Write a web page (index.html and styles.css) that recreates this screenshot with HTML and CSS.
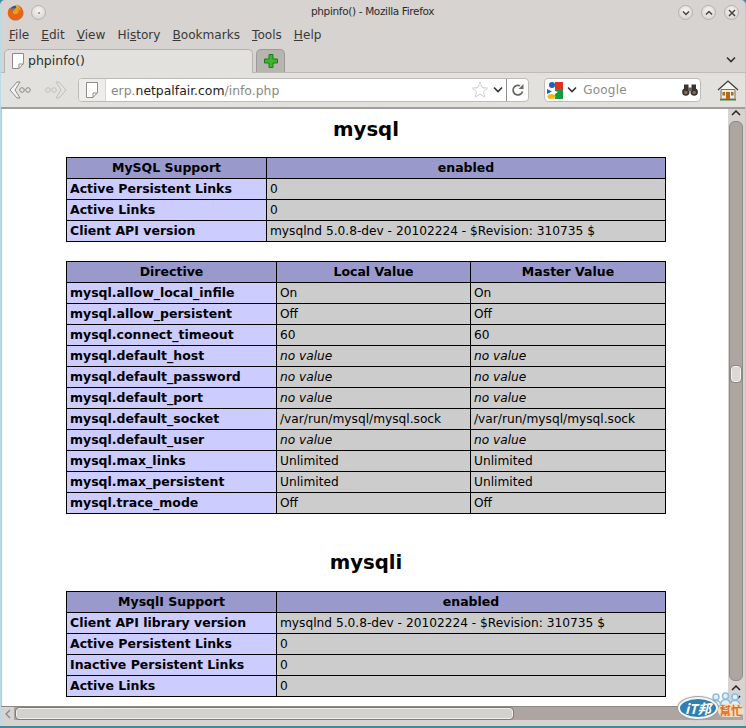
FILE: index.html
```html
<!DOCTYPE html>
<html lang="en">
<head>
<meta charset="utf-8">
<title>phpinfo() - Mozilla Firefox</title>
<link rel="stylesheet" href="styles.css">
</head>
<body>
<div class="window">
  <header class="titlebar">
    <div class="title-left">
      <svg class="ff-logo" width="17" height="17" viewBox="0 0 18 18"><circle cx="9.500" cy="8.500" r="7" fill="#2a5a9a"/><path d="M10 3.500C12.500 4 14 6.500 13.500 9 13 11.500 10 13 7.500 12 5.500 11 5 9 6 7.500Z" fill="#e8a020"/><path d="M10 .8C14 1.500 17.500 5 17.500 9.500 17.500 14 13.500 17.500 9 17.500 4.500 17.500.8 14 .8 9.500.8 7 1.800 5 3.300 3.500L3.800 6C5 4.500 6.500 4 8 4.800 6.800 5.500 5.300 7 6 9 7 11.300 10.500 11.300 12 9 13 7 12.300 3.500 10 .8Z" fill="#e2661a"/><path d="M10 .8C12.500 2 14.300 4.500 14.500 7.500 13 4.800 11.500 3.800 9.500 3.500Z" fill="#f3b72c"/></svg>
      <span class="round-btn pin"><i class="dot"></i></span>
    </div>
    <span class="title-text">phpinfo() - Mozilla Firefox</span>
    <div class="title-right">
      <span class="round-btn"><svg width="10" height="10" viewBox="0 0 10 10"><path d="M2 3.500 5 6.500 8 3.500" fill="none" stroke="#444" stroke-width="1.500"/></svg></span>
      <span class="round-btn"><svg width="10" height="10" viewBox="0 0 10 10"><path d="M2 6.500 5 3.500 8 6.500" fill="none" stroke="#444" stroke-width="1.500"/></svg></span>
      <span class="round-btn"><svg width="10" height="10" viewBox="0 0 10 10"><path d="M2 2 8 8M8 2 2 8" fill="none" stroke="#444" stroke-width="1.500"/></svg></span>
    </div>
  </header>
  <nav class="menubar">
    <span><u>F</u>ile</span><span><u>E</u>dit</span><span><u>V</u>iew</span><span>Hi<u>s</u>tory</span><span><u>B</u>ookmarks</span><span><u>T</u>ools</span><span><u>H</u>elp</span>
  </nav>
  <div class="tabbar">
    <div class="tab">
      <svg class="page-icon" width="14" height="16" viewBox="0 0 14 16"><path d="M1.500.5H12.500V10.500L8 15.500H1.500Z" fill="#fff" stroke="#8f8c88"/><path d="M8 15.500V11H12.500" fill="none" stroke="#8f8c88"/></svg>
      <span>phpinfo()</span>
    </div>
    <div class="newtab"><svg width="16" height="16" viewBox="0 0 16 16"><path d="M6 1.500H10V6H14.500V10H10V14.500H6V10H1.500V6H6Z" fill="#3fb52c" stroke="#1f7d18"/></svg></div>
    <div class="tabbar-fill"><svg width="12" height="8" viewBox="0 0 12 8"><path d="M2 1.500 6 5.500 10 1.500" fill="none" stroke="#333" stroke-width="1.600"/></svg></div>
  </div>
  <div class="navbar">
    <svg class="nav-arrow" width="32" height="22" viewBox="0 0 32 22"><path d="M10 3 3 11 10 19H13L8 11 13 3Z" fill="#f4f3f1" stroke="#8d8a86"/><circle cx="15" cy="11" r="2.300" fill="none" stroke="#8d8a86"/><circle cx="21" cy="11" r="2.300" fill="none" stroke="#8d8a86"/></svg>
    <svg class="nav-arrow" width="32" height="22" viewBox="0 0 32 22"><path d="M20 3 27 11 20 19H17L22 11 17 3Z" fill="#e4e2df" stroke="#c2bfbb"/><circle cx="9" cy="11" r="2.300" fill="none" stroke="#c2bfbb"/><circle cx="15" cy="11" r="2.300" fill="none" stroke="#c2bfbb"/></svg>
    <div class="urlbar">
      <div class="url-icon"><svg width="14" height="16" viewBox="0 0 14 16"><path d="M1.500.5H12.500V10.500L8 15.500H1.500Z" fill="#fff" stroke="#8f8c88"/><path d="M8 15.500V11H12.500" fill="none" stroke="#8f8c88"/></svg></div>
      <div class="url-text"><span class="dim">erp.</span>netpalfair.com<span class="dim">/info.php</span></div>
      <svg width="18" height="18" viewBox="0 0 18 18"><path d="M9 1.500 11.200 6.600 16.500 7.100 12.500 10.700 13.700 16 9 13.200 4.300 16 5.500 10.700 1.500 7.100 6.800 6.600Z" fill="#fff" stroke="#cfcdca"/></svg>
      <svg class="url-drop" width="10" height="8" viewBox="0 0 10 8"><path d="M1 1.500 5 5.500 9 1.500" fill="none" stroke="#333" stroke-width="1.600"/></svg>
      <div class="reload"><svg width="14" height="14" viewBox="0 0 14 14"><path d="M11.500 8.500A4.800 4.800 0 1 1 9 2.800" fill="none" stroke="#6b6966" stroke-width="1.800"/><path d="M7.500 6H12.500V1Z" fill="#6b6966"/></svg></div>
    </div>
    <div class="searchbar">
      <svg class="g-logo" width="16" height="17" viewBox="0 0 16 17"><circle cx="5" cy="3" r="3" fill="#1a5fc4"/><path d="M0 7 5 9.500 0 12Z" fill="#1a5fc4"/><rect x="8" y="0" width="8" height="7" fill="#e03020"/><path d="M8 7H16V17H8V12L11 10 8 9Z" fill="#159a3c"/><ellipse cx="4.500" cy="14.500" rx="4" ry="2.500" fill="#f0b818"/></svg>
      <svg class="search-drop" width="10" height="8" viewBox="0 0 10 8"><path d="M1 1.500 5 5.500 9 1.500" fill="none" stroke="#333" stroke-width="1.600"/></svg>
      <span class="search-text">Google</span>
      <svg width="16" height="12" viewBox="0 0 16 12"><rect x="2" y="0.500" width="4.500" height="6" fill="#3a3430"/><rect x="9.500" y="0.500" width="4.500" height="6" fill="#3a3430"/><circle cx="3.800" cy="8" r="3.700" fill="#3a3430"/><circle cx="12.200" cy="8" r="3.700" fill="#3a3430"/><circle cx="3.800" cy="8.500" r="1.800" fill="#8a6a4a"/><circle cx="12.200" cy="8.500" r="1.800" fill="#8a6a4a"/><rect x="6" y="3.500" width="4" height="3.500" fill="#6b625c"/></svg>
    </div>
    <svg class="home" width="22" height="22" viewBox="0 0 22 22"><path d="M1 11 11 2 21 11" fill="#f6f4ef" stroke="#3b3b38" stroke-width="1.300"/><path d="M4 10.500H18V20H4Z" fill="#f0ebdd" stroke="#77736a"/><rect x="9" y="13" width="4" height="7" fill="#b86a12"/><rect x="5.500" y="13" width="2.500" height="3.500" fill="#a86a20"/><rect x="14" y="13" width="2.500" height="3.500" fill="#a86a20"/><rect x="3" y="20" width="16" height="1.500" fill="#3f8a2a"/></svg>
  </div>
  <div class="viewport">
    <div class="content-row">
      <main class="content">
        <h2>mysql</h2>
        <table class="t1">
          <tr class="h"><th>MySQL Support</th><th>enabled</th></tr>
          <tr><td class="e">Active Persistent Links</td><td class="v">0</td></tr>
          <tr><td class="e">Active Links</td><td class="v">0</td></tr>
          <tr><td class="e">Client API version</td><td class="v">mysqlnd 5.0.8-dev - 20102224 - $Revision: 310735 $</td></tr>
        </table>
        <table class="t2">
          <tr class="h"><th>Directive</th><th>Local Value</th><th>Master Value</th></tr>
          <tr><td class="e">mysql.allow_local_infile</td><td class="v">On</td><td class="v">On</td></tr>
          <tr><td class="e">mysql.allow_persistent</td><td class="v">Off</td><td class="v">Off</td></tr>
          <tr><td class="e">mysql.connect_timeout</td><td class="v">60</td><td class="v">60</td></tr>
          <tr><td class="e">mysql.default_host</td><td class="v"><i>no value</i></td><td class="v"><i>no value</i></td></tr>
          <tr><td class="e">mysql.default_password</td><td class="v"><i>no value</i></td><td class="v"><i>no value</i></td></tr>
          <tr><td class="e">mysql.default_port</td><td class="v"><i>no value</i></td><td class="v"><i>no value</i></td></tr>
          <tr><td class="e">mysql.default_socket</td><td class="v">/var/run/mysql/mysql.sock</td><td class="v">/var/run/mysql/mysql.sock</td></tr>
          <tr><td class="e">mysql.default_user</td><td class="v"><i>no value</i></td><td class="v"><i>no value</i></td></tr>
          <tr><td class="e">mysql.max_links</td><td class="v">Unlimited</td><td class="v">Unlimited</td></tr>
          <tr><td class="e">mysql.max_persistent</td><td class="v">Unlimited</td><td class="v">Unlimited</td></tr>
          <tr><td class="e">mysql.trace_mode</td><td class="v">Off</td><td class="v">Off</td></tr>
        </table>
        <h2 class="second">mysqli</h2>
        <table class="t3">
          <tr class="h"><th>MysqlI Support</th><th>enabled</th></tr>
          <tr><td class="e">Client API library version</td><td class="v">mysqlnd 5.0.8-dev - 20102224 - $Revision: 310735 $</td></tr>
          <tr><td class="e">Active Persistent Links</td><td class="v">0</td></tr>
          <tr><td class="e">Inactive Persistent Links</td><td class="v">0</td></tr>
          <tr><td class="e">Active Links</td><td class="v">0</td></tr>
        </table>
      </main>
      <aside class="vscroll">
        <svg class="sb-arrow top" width="12" height="8" viewBox="0 0 12 8"><path d="M2 6 6 2 10 6" fill="none" stroke="#222" stroke-width="1.500"/></svg>
        <div class="vtrack"><div class="vthumb"></div></div>
        <svg class="sb-arrow" width="12" height="8" viewBox="0 0 12 8"><path d="M2 6 6 2 10 6" fill="none" stroke="#222" stroke-width="1.500"/></svg>
        <svg class="sb-arrow last" width="12" height="8" viewBox="0 0 12 8"><path d="M2 2 6 6 10 2" fill="none" stroke="#222" stroke-width="1.500"/></svg>
      </aside>
    </div>
    <div class="hscroll">
      <svg class="h-arrow" width="8" height="12" viewBox="0 0 8 12"><path d="M6 2 2 6 6 10" fill="none" stroke="#888" stroke-width="1.300"/></svg>
      <div class="htrack"><div class="hthumb"></div></div>
    </div>
  </div>
</div>
<div class="badge">
  <svg class="badge-people" width="31" height="15" viewBox="0 0 31 15"><g fill="#e4f0f9" stroke="#8fbde0" stroke-width="1.500"><circle cx="6" cy="5" r="3"/><path d="M1 14C1 10 3 8.500 6 8.500S11 10 11 14Z"/><circle cx="25" cy="5" r="3"/><path d="M20 14C20 10 22 8.500 25 8.500S30 10 30 14Z"/><circle cx="15.500" cy="4" r="3"/><path d="M10.500 14C10.500 9 12.500 7.500 15.500 7.500S20.500 9 20.500 14Z"/></g></svg>
  <div class="badge-oval">iT邦</div>
  <div class="badge-help">幫忙</div>
</div>
</body>
</html>
```
FILE: styles.css
```css
* { box-sizing: border-box; }
html, body { margin: 0; padding: 0; width: 746px; height: 728px; overflow: hidden; background: #3f8a9e; }
body { font-family: "DejaVu Sans", sans-serif; color: #000; position: relative; }
.window { width: 746px; height: 726px; padding-bottom: 6px; background: #d6d3d0; border-radius: 5px 5px 0 0; display: flex; flex-direction: column; border-left: 1px solid #b9dbe6; border-right: 1px solid #c9c6c3; }
.titlebar { height: 23px; padding: 2px 6px 0 6px; display: flex; align-items: center; justify-content: space-between; position: relative; flex: none; }
.title-left, .title-right { display: flex; align-items: center; gap: 7px; }
.title-right { gap: 8px; }
.ff-logo { display: block; }
.round-btn { width: 15px; height: 15px; border-radius: 50%; background: radial-gradient(circle at 50% 35%, #f6f5f4, #d2cfcc); border: 1px solid #b4b1ae; display: flex; align-items: center; justify-content: center; }
.dot { width: 2px; height: 2px; background: #888; border-radius: 50%; }
.title-text { position: absolute; left: 310px; top: 3px; font-size: 10.500px; letter-spacing: -.35px; line-height: 16px; color: #2c2b2a; }
.menubar { height: 24px; flex: none; display: flex; gap: 12px; padding: 0 0 0 8px; align-items: center; font-size: 12.100px; color: #3a3937; }
.tabbar { height: 26px; flex: none; display: flex; align-items: flex-end; padding-left: 3px; border-bottom: 1px solid #bdbab7; }
.tab { width: 249px; height: 24px; background: #e3e1de; border: 1px solid #b5b2af; border-bottom: 0; border-radius: 5px 5px 0 0; display: flex; align-items: center; gap: 3px; padding: 0 0 2px 6px; font-size: 12.500px; color: #2e2d2c; margin-bottom: -1px; position: relative; }
.newtab { width: 29px; height: 23px; margin-left: 3px; background: #b8b5b1; border: 1px solid #9d9a97; border-bottom: 0; border-radius: 5px 5px 0 0; display: flex; align-items: center; justify-content: center; }
.tabbar-fill { flex: 1; height: 23px; display: flex; justify-content: flex-end; align-items: center; padding: 0 8px 2px 0; }
.navbar { height: 36px; flex: none; background: #e3e1de; border-bottom: 2px solid #a09d9a; display: flex; align-items: center; padding: 0 6px 0 6px; }
.nav-arrow { flex: none; }
.urlbar { width: 452px; height: 24px; margin-left: 7px; background: #fff; border: 1px solid #bdbab7; border-radius: 4px; display: flex; align-items: center; }
.url-icon { width: 27px; height: 22px; background: #eeedeb; border-right: 1px solid #d6d4d1; border-radius: 3px 0 0 3px; display: flex; align-items: center; justify-content: center; flex: none; }
.url-text { flex: 1; padding-left: 5px; font-size: 12.400px; color: #222; }
.dim { color: #8a8886; }
.url-drop { margin: 0 3px 0 4px; }
.reload { width: 22px; height: 22px; border-left: 1px solid #8f8c89; display: flex; align-items: center; justify-content: center; flex: none; }
.searchbar { width: 157px; height: 24px; margin-left: 15px; background: #fff; border: 1px solid #bdbab7; border-radius: 4px; display: flex; align-items: center; padding: 0 2px 0 2px; }
.g-logo { flex: none; }
.search-drop { margin-left: 4px; flex: none; }
.search-text { flex: 1; padding-left: 6px; font-size: 12px; color: #8d8b89; letter-spacing: .2px; }
.home { margin-left: 16px; flex: none; }
.viewport { flex: 1; min-height: 0; display: flex; flex-direction: column; margin: 0 2px 0 0; }
.content-row { flex: 1; min-height: 0; display: flex; background: #fff; }
.content { flex: 1; min-width: 0; overflow: hidden; background: #fff; padding: 0 0 0 64px; border-left: 1px solid #c8c6c4; }
h2 { font-size: 19.700px; font-weight: bold; line-height: 24px; margin: 9px 0 15px; text-align: center; width: 600px; }
h2.second { margin: 37px 0 16px; }
table { border-collapse: collapse; width: 600px; table-layout: fixed; font-size: 12.200px; line-height: 16px; }
th, td { border: 1px solid #000; height: 21px; padding: 0 3px; overflow: hidden; white-space: nowrap; }
th { background: #9999cc; text-align: center; font-weight: bold; font-size: 12.500px; }
td.e { background: #ccccff; font-weight: bold; font-size: 12.500px; }
td.v { background: #cccccc; }
.t1 { margin-bottom: 19px; }
.t1 tr > :first-child { width: 200px; }
.t2 tr > :first-child { width: 210px; }
.t2 tr > :nth-child(2) { width: 194px; }
.t3 tr > :first-child { width: 210px; }
.vscroll { width: 15px; flex: none; display: flex; flex-direction: column; align-items: center; background: #d6d3d0; }
.sb-arrow { flex: none; margin: 1px 0; }
.sb-arrow.top { margin: 0 0 4px; }
.sb-arrow.last { margin-bottom: 4px; }
.vtrack { flex: 1; width: 14px; background: #ada5a1; position: relative; border-radius: 6px; margin-bottom: 2px; border: 1px solid #8e8985; }
.vthumb { position: absolute; left: 1px; top: 244px; width: 10px; height: 16px; background: #dbd9d7; border: 1px solid #f2f1f0; outline: 1px solid #8e8985; border-radius: 3px; }
.hscroll { height: 14px; flex: none; background: #d6d3d0; border-top: 1px solid #8e8985; display: flex; align-items: center; padding: 0 0 0 3px; gap: 2px; }
.h-arrow { flex: none; }
.htrack { flex: 1; height: 13px; background: #ada5a1; display: flex; align-items: center; }
.hthumb { width: 497px; height: 11px; margin-left: 2px; background: #d3d1ce; border: 1px solid #f0efed; outline: 1px solid #7f7b77; border-radius: 3px; }
.badge { position: absolute; left: 677px; top: 690px; width: 69px; height: 38px; }
.badge-people { position: absolute; left: 33px; top: 2px; }
.badge-oval { position: absolute; left: 1px; top: 7px; width: 40px; height: 22px; background: #2f7fb2; border: 2px solid #f4f6f8; box-shadow: 0 0 1px 1px #9a9a9a; border-radius: 50%; color: #fff; font-size: 13.500px; line-height: 18px; font-weight: bold; font-style: italic; text-align: center; font-family: "Noto Sans CJK TC", "DejaVu Sans", sans-serif; }
.badge-help { position: absolute; left: 41px; top: 14px; width: 26px; height: 13px; font-size: 11.500px; line-height: 13px; color: #d9701c; font-weight: bold; font-family: "Noto Sans CJK TC", sans-serif; background: #f3ddc6; border-radius: 6px; text-align: center; white-space: nowrap; }
```
